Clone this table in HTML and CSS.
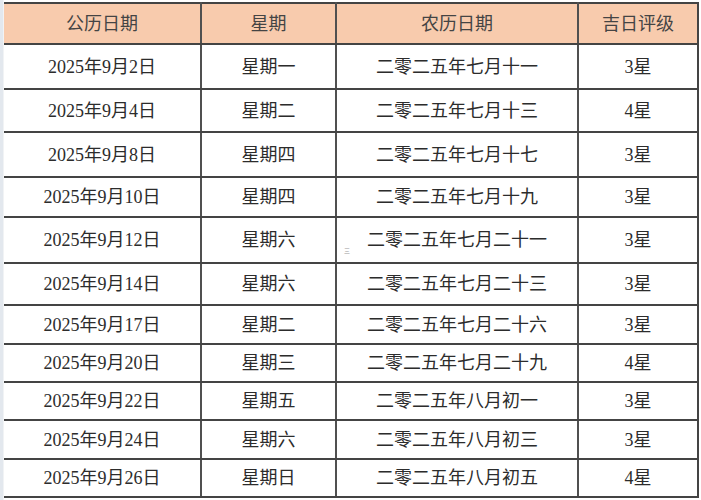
FILE: index.html
```html
<!DOCTYPE html>
<html lang="zh-CN">
<head>
<meta charset="utf-8">
<title>吉日表</title>
<link rel="stylesheet" href="styles.css">
</head>
<body>
<div class="page">
  <div class="strip"></div>
  <table class="grid">
    <colgroup>
      <col class="c1"><col class="c2"><col class="c3"><col class="c4">
    </colgroup>
    <thead>
      <tr class="h41"><th>公历日期</th><th>星期</th><th>农历日期</th><th>吉日评级</th></tr>
    </thead>
    <tbody>
      <tr class="h45"><td>2025年9月2日</td><td>星期一</td><td>二零二五年七月十一</td><td>3星</td></tr>
      <tr class="h43"><td>2025年9月4日</td><td>星期二</td><td>二零二五年七月十三</td><td>4星</td></tr>
      <tr class="h45"><td>2025年9月8日</td><td>星期四</td><td>二零二五年七月十七</td><td>3星</td></tr>
      <tr class="h40"><td>2025年9月10日</td><td>星期四</td><td>二零二五年七月十九</td><td>3星</td></tr>
      <tr class="h46"><td>2025年9月12日</td><td>星期六</td><td class="mark-cell"><span class="mark">三</span>二零二五年七月二十一</td><td>3星</td></tr>
      <tr class="h42"><td>2025年9月14日</td><td>星期六</td><td>二零二五年七月二十三</td><td>3星</td></tr>
      <tr class="h39"><td>2025年9月17日</td><td>星期二</td><td>二零二五年七月二十六</td><td>3星</td></tr>
      <tr class="h38"><td>2025年9月20日</td><td>星期三</td><td>二零二五年七月二十九</td><td>4星</td></tr>
      <tr class="h38"><td>2025年9月22日</td><td>星期五</td><td>二零二五年八月初一</td><td>3星</td></tr>
      <tr class="h39"><td>2025年9月24日</td><td>星期六</td><td>二零二五年八月初三</td><td>3星</td></tr>
      <tr class="h38"><td>2025年9月26日</td><td>星期日</td><td>二零二五年八月初五</td><td>4星</td></tr>
    </tbody>
  </table>
</div>
</body>
</html>
```
FILE: styles.css
```css
html, body {
  margin: 0;
  padding: 0;
  background: #ffffff;
}
.page {
  position: relative;
  display: flex;
  align-items: flex-start;
  width: 701px;
  height: 500px;
  padding-top: 2px;
  box-sizing: border-box;
  font-family: "Liberation Serif", "Noto Sans CJK SC", serif;
}
.strip {
  position: absolute;
  left: 0;
  top: 0;
  width: 3px;
  height: 500px;
  background: #e3e8ee;
  border-right: 1px solid #f1f3f5;
}
.grid {
  margin-left: 4px;
  border-collapse: collapse;
  table-layout: fixed;
  width: 694px;
  border-top: 2px solid #444;
  border-right: 2px solid #444;
}
.c1 { width: 197px; }
.c2 { width: 135px; }
.c3 { width: 242px; }
.c4 { width: 120px; }
th, td {
  padding: 0;
  text-align: center;
  vertical-align: middle;
  font-size: 18px;
  font-weight: normal;
  line-height: 1;
  border-bottom: 2px solid #444;
  border-left: 2px solid #505050;
  white-space: nowrap;
}
th:first-child, td:first-child {
  border-left: none;
}
th {
  background: #f8cbad;
  color: #444444;
}
td {
  color: #2c2c2c;
}
.h38 { height: 38px; }
.h39 { height: 39px; }
.h40 { height: 40px; }
.h41 { height: 41px; }
.h42 { height: 42px; }
.h43 { height: 43px; }
.h45 { height: 45px; }
.h46 { height: 46px; }
.mark-cell {
  position: relative;
}
.mark {
  position: absolute;
  left: 7px;
  top: 30px;
  font-size: 6px;
  color: #9a9a9a;
}
```
